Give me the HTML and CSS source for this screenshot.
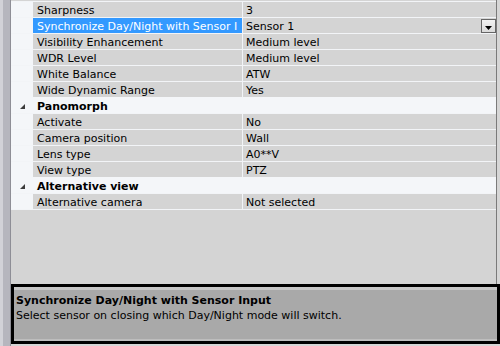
FILE: index.html
```html
<!DOCTYPE html>
<html lang="en">
    <head>
        <meta charset="UTF-8" />
        <title>Camera properties</title>
        <link rel="stylesheet" href="styles.css">
    </head>
    <body>
        <div class="window">
            <div class="side"></div>
            <div class="main">
                <div class="grid">
                    <div class="row"><span class="margin"></span><span class="name">Sharpness</span><span class="value">3</span></div>
                    <div class="row selected">
                        <span class="margin"></span>
                        <span class="name">Synchronize Day/Night with Sensor I</span>
                        <span class="value">Sensor 1
                            <span class="drop">
                                <svg width="7" height="4" viewBox="0 0 7 4"><polygon points="0,0 7,0 3.5,4" fill="#000"/></svg>
                            </span>
                        </span>
                    </div>
                    <div class="row"><span class="margin"></span><span class="name">Visibility Enhancement</span><span class="value">Medium level</span></div>
                    <div class="row"><span class="margin"></span><span class="name">WDR Level</span><span class="value">Medium level</span></div>
                    <div class="row"><span class="margin"></span><span class="name">White Balance</span><span class="value">ATW</span></div>
                    <div class="row"><span class="margin"></span><span class="name">Wide Dynamic Range</span><span class="value">Yes</span></div>

                    <div class="category">
                        <span class="toggle"><svg width="6" height="6" viewBox="0 0 6 6"><polygon points="5,0 5,5 0,5" fill="#3c3c3c"/></svg></span>
                        <span class="title">Panomorph</span>
                    </div>
                    <div class="row"><span class="margin"></span><span class="name">Activate</span><span class="value">No</span></div>
                    <div class="row"><span class="margin"></span><span class="name">Camera position</span><span class="value">Wall</span></div>
                    <div class="row"><span class="margin"></span><span class="name">Lens type</span><span class="value">A0**V</span></div>
                    <div class="row"><span class="margin"></span><span class="name">View type</span><span class="value">PTZ</span></div>

                    <div class="category">
                        <span class="toggle"><svg width="6" height="6" viewBox="0 0 6 6"><polygon points="5,0 5,5 0,5" fill="#3c3c3c"/></svg></span>
                        <span class="title">Alternative view</span>
                    </div>
                    <div class="row last"><span class="margin"></span><span class="name">Alternative camera</span><span class="value">Not selected</span></div>
                </div>

                <!-- description of the selected property -->
                <div class="help">
                    <div class="help-title">Synchronize Day/Night with Sensor Input</div>
                    <div class="help-text">Select sensor on closing which Day/Night mode will switch.</div>
                </div>
            </div>
        </div>
    </body>
</html>
```

FILE: styles.css
```css
body {
    margin: 0;
    font-family: "DejaVu Sans", Verdana, sans-serif;
    font-size: 11px;
    color: #000;
    background: #d6d6d6;
}
.window {
    display: flex;
    height: 346px;
}
.side {
    width: 10px;
    background: linear-gradient(to right, #d2d2d8 0, #d2d2d8 3px, #b6b6be 3px);
}
.main {
    flex: 1;
    display: flex;
    flex-direction: column;
    border-left: 1px solid #8e8e96;
}
.grid {
    flex: 1;
    margin-right: 3px;
    padding-top: 1px;
    background: #d4d4d4;
    border-right: 1px solid #7a7a7a;
}
.row {
    display: flex;
    height: 15px;
    line-height: 17px;
    border-top: 1px solid #f2f4f7;
}
.row.last {
    border-bottom: 1px solid #f2f4f7;
}
.margin {
    width: 22px;
    flex-shrink: 0;
    background: #f4f6f9;
}
.name {
    width: 205px;
    flex-shrink: 0;
    padding-left: 4px;
    white-space: nowrap;
    overflow: hidden;
    border-right: 1px solid #f2f4f7;
}
.value {
    flex: 1;
    display: flex;
    padding-left: 3px;
    white-space: nowrap;
}
.selected .name {
    background: #3399ff;
    color: #fff;
}
.drop {
    margin-left: auto;
    width: 15px;
    height: 14px;
    margin-top: 1px;
    border: 1px solid #666;
    background: linear-gradient(#f2f2f2, #dadada);
    display: flex;
    align-items: center;
    justify-content: center;
    box-sizing: border-box;
    padding-top: 3px;
    position: relative;
    z-index: 1;
}
.drop svg {
    display: block;
}
.category {
    display: flex;
    align-items: center;
    height: 16px;
    padding-top: 2px;
    box-sizing: border-box;
    background: #f4f6f9;
}
.toggle {
    width: 26px;
    padding-left: 9px;
    box-sizing: border-box;
    display: flex;
    padding-top: 2px;
}
.title {
    font-weight: bold;
}
.help {
    height: 48px;
    margin-bottom: 2px;
    border: 3px solid #000;
    padding: 6px 0 0 2px;
    background: linear-gradient(#c6c6c6 0, #c6c6c6 3px, #a9a9a9 3px, #a9a9a9 52px, #bdbdbd 52px);
    line-height: 15px;
}
.help-title {
    font-weight: bold;
}
```
